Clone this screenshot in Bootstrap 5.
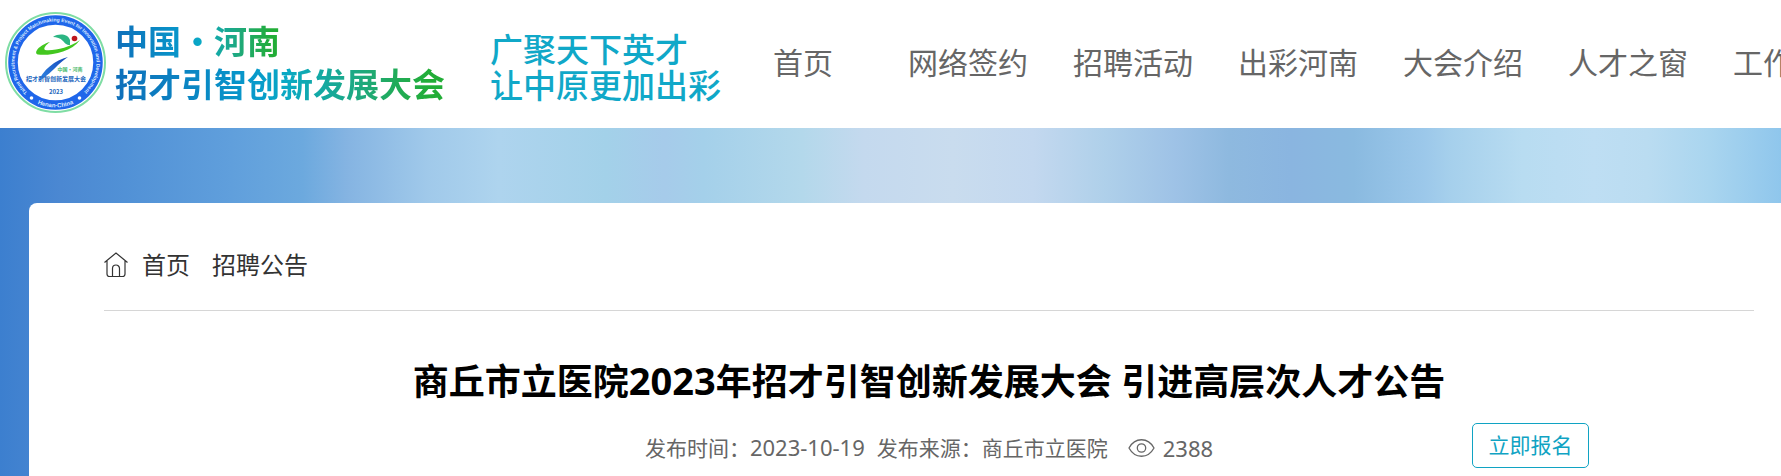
<!DOCTYPE html>
<html lang="zh-CN">
<head>
<meta charset="utf-8">
<meta name="viewport" content="width=device-width, initial-scale=1">
<title>招才引智创新发展大会</title>
<link href="https://cdn.jsdelivr.net/npm/bootstrap@5.3.0/dist/css/bootstrap.min.css" rel="stylesheet">
<style>
  body {
    font-family: "Noto Sans", "Noto Sans CJK SC", sans-serif;
    color: #333;
    overflow-x: hidden;
  }
  .site-header { height: 128px; padding: 0 0 4px 4px; overflow: hidden; }
  .emblem { width: 103px; height: 103px; }
  .brand-name, .slogan {
    font-family: "Noto Sans CJK SC", sans-serif;
    font-size: 33px;
    white-space: nowrap;
  }
  .brand-name { font-weight: 700; line-height: 43px; margin-left: 8px; }
  .brand-name span {
    display: block;
    width: max-content;
    color: transparent;
    background-clip: text;
    -webkit-background-clip: text;
    background-image: linear-gradient(90deg, #0f6fba, #0799cb 42%, #0aa9c4 52%, #1fa97c 75%, #22ad37 95%);
  }
  .slogan { font-weight: 500; color: #10a8c8; line-height: 36px; margin-left: 45px; padding-top: 8px; }
  .main-nav { margin-left: 52px; gap: 45px; }
  .main-nav .nav-link { padding: 0; font-size: 30px; line-height: 45px; color: #666; white-space: nowrap; }
  .main-nav .nav-item:first-child { margin-right: 30px; }
  .backdrop {
    min-height: 348px;
    padding: 75px 0 0 29px;
    background: linear-gradient(90deg, #3c7fcf 0%, #4b88d2 3.4%, #5191d6 7%, #609fdc 13%, #6ca9de 17%, #85b4e2 19.5%,
      #a0c9ea 24%, #aed4ee 28%, #a3d1e9 34%, #a6cbea 37.3%, #a4d0ea 39.5%, #b3d8eb 45%, #c4d9ee 48.5%, #c9dcee 53.5%,
      #c3d8ef 58%, #afd0ea 62%, #9ec2e6 66%, #8eb9df 69%, #8ab5e0 72.5%, #8abae0 76%, #9cc8ea 80%, #a6d0ec 81.5%,
      #b8dcf1 85.5%, #bedef3 89.5%, #badcf1 92.5%, #a9d5ef 96%, #8fc6ec 100%);
  }
  .panel { min-height: 273px; border-top-left-radius: 8px; padding: 44px 27px 0 75px; }
  .crumbs { font-size: 24px; line-height: 36px; padding-bottom: 27px; border-bottom: 1px solid #d6d6d6; }
  .crumbs a { color: #333; margin-left: 14px; }
  .crumbs a + a { margin-left: 22px; }
  .home-icon { width: 24px; height: 26px; }
  .article-title { font-size: 36px; line-height: 54px; font-weight: 700; color: #000; margin: 42px 0 0; }
  .article-title span { font-size: 38px; }
  .meta { font-size: 21px; line-height: 32px; color: #666; margin-top: 22px; white-space: nowrap; }
  .meta .digits { font-size: 22px; }
  .eye-icon { width: 27px; height: 20px; margin: 0 8px 0 20px; }
  .apply {
    right: 165px;
    top: -8px;
    width: 117px;
    height: 45px;
    padding: 0;
    font-size: 21px;
    color: #10a3c3;
    border: 1px solid #10a3c3;
    border-radius: 5px;
  }
</style>
</head>
<body>
<header class="site-header d-flex align-items-center bg-white">
  <a href="#" class="d-flex align-items-center flex-shrink-0 text-decoration-none">
    <svg class="emblem flex-shrink-0" viewBox="0 0 103 103" aria-hidden="true">
      <defs>
        <path id="ringTop" d="M24.200 82A41 41 0 1 1 78.800 82"/>
        <path id="ringBottom" d="M24 87A45 45 0 0 0 79 87"/>
        <linearGradient id="leg" x1="0" y1="1" x2="1" y2="0"><stop offset="0" stop-color="#2f8be8"/><stop offset="1" stop-color="#1746b8"/></linearGradient>
      </defs>
      <circle cx="51.500" cy="51.500" r="49.500" fill="#fff" stroke="#7fdda4" stroke-width="2"/>
      <circle cx="51.500" cy="51.500" r="42.500" fill="#fff" stroke="#1f66ea" stroke-width="9.500"/>
      <g font-family="Liberation Sans, sans-serif" font-weight="700" fill="#dcebff">
        <text font-size="5"><textPath href="#ringTop" startOffset="1">Talent Recruitment &amp; Project Matchmaking Event for Innovation and Development</textPath></text>
        <text font-size="6" text-anchor="middle"><textPath href="#ringBottom" startOffset="50%">Henan·China</textPath></text>
      </g>
      <circle cx="27.500" cy="87" r="1.800" fill="#fff"/>
      <circle cx="75.500" cy="87" r="1.800" fill="#fff"/>
      <path d="M49 26C55 22 64 23 66 29L66 34C62 34 61 32 59 30C56 27 53 26 49 26Z" fill="#2bb583"/>
      <path d="M46 31C35 34 29 42 34 43.500C44 45 67 42 76 29C65 37 50 40 41 39C39 37 42 34 46 31Z" fill="#43c71f"/>
      <path d="M64 46C51 49 39 59 34 71C43 65 49 59 54 54C57 51 60 49 64 46Z" fill="url(#leg)"/>
      <circle cx="70.500" cy="27.500" r="2.800" fill="#bd171f"/>
      <g font-family="Noto Sans CJK SC, sans-serif" font-weight="700" text-anchor="middle">
        <text x="66" y="60" font-size="5" fill="#45b969">中国·河南</text>
        <text x="52" y="70" font-size="6" fill="#2467bd">招才引智创新发展大会</text>
        <text x="52" y="83" font-size="6" fill="#2467bd">2023</text>
      </g>
    </svg>
    <div class="brand-name"><span>中国·河南</span><span>招才引智创新发展大会</span></div>
    <div class="slogan">广聚天下英才<br>让中原更加出彩</div>
  </a>
  <nav class="flex-shrink-0" aria-label="主导航">
    <ul class="main-nav nav flex-nowrap">
      <li class="nav-item"><a class="nav-link" href="#">首页</a></li>
      <li class="nav-item"><a class="nav-link" href="#">网络签约</a></li>
      <li class="nav-item"><a class="nav-link" href="#">招聘活动</a></li>
      <li class="nav-item"><a class="nav-link" href="#">出彩河南</a></li>
      <li class="nav-item"><a class="nav-link" href="#">大会介绍</a></li>
      <li class="nav-item"><a class="nav-link" href="#">人才之窗</a></li>
      <li class="nav-item"><a class="nav-link" href="#">工作</a></li>
    </ul>
  </nav>
</header>
<div class="backdrop">
  <main class="panel bg-white">
    <nav class="crumbs d-flex align-items-center" aria-label="面包屑">
      <svg class="home-icon" viewBox="0 0 24 26" fill="none" stroke="#333" stroke-width="1.200" aria-hidden="true">
        <path d="M0.500 10.500L12 1L23.500 10.500M3 9V22Q3 24.500 5.500 24.500H18.500Q21 24.500 21 22V9M8.500 24V16.500A3.500 3.500 0 0 1 15.500 16.500V24"/>
      </svg>
      <a href="#" class="text-decoration-none">首页</a>
      <a href="#" class="text-decoration-none">招聘公告</a>
    </nav>
    <h1 class="article-title text-center">商丘市立医院<span>2023</span>年招才引智创新发展大会 引进高层次人才公告</h1>
    <div class="meta position-relative d-flex justify-content-center align-items-center">
      <span>发布时间：<span class="digits">2023-10-19</span></span>
      <span class="ms-2 ps-1">发布来源：商丘市立医院</span>
      <svg class="eye-icon" viewBox="0 0 27 20" fill="none" stroke="#666" stroke-width="1.300" aria-hidden="true">
        <path d="M1 10C7-1 20-1 26 10C20 21 7 21 1 10Z"/><circle cx="13.500" cy="10" r="4.200"/>
      </svg>
      <span class="digits">2388</span>
      <button type="button" class="apply btn position-absolute">立即报名</button>
    </div>
  </main>
</div>
<script src="https://cdn.jsdelivr.net/npm/bootstrap@5.3.0/dist/js/bootstrap.bundle.min.js"></script>
</body>
</html>
